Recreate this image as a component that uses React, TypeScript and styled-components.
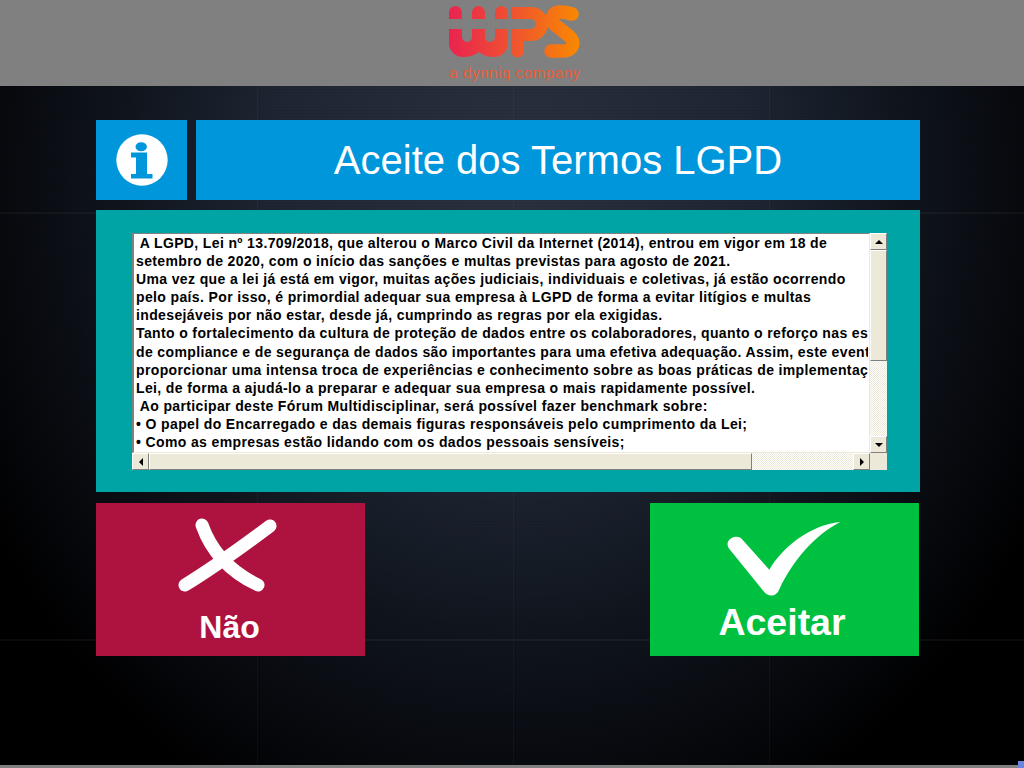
import React from "react";
import styled, { createGlobalStyle } from "styled-components";

const GlobalStyle = createGlobalStyle`
  html, body {
    margin: 0;
    padding: 0;
    background: #000;
  }
`;

const Screen = styled.div`
  position: relative;
  width: 1024px;
  height: 768px;
  overflow: hidden;
  display: flex;
  flex-direction: column;
  font-family: "Liberation Sans", Arial, sans-serif;
  background:
    repeating-linear-gradient(0deg, rgba(0, 0, 0, 0.05) 0 1px, rgba(255, 255, 255, 0) 1px 3px),
    linear-gradient(rgba(255, 255, 255, 0) 212px, rgba(255, 255, 255, 0.04) 212px 214px, rgba(255, 255, 255, 0) 214px 639px, rgba(255, 255, 255, 0.04) 639px 641px, rgba(255, 255, 255, 0) 641px),
    linear-gradient(90deg, rgba(255, 255, 255, 0) 257px, rgba(255, 255, 255, 0.03) 257px 258px, rgba(255, 255, 255, 0) 258px 513px, rgba(255, 255, 255, 0.03) 513px 514px, rgba(255, 255, 255, 0) 514px 769px, rgba(255, 255, 255, 0.03) 769px 770px, rgba(255, 255, 255, 0) 770px),
    radial-gradient(ellipse 600px 700px at 512px 180px, #2a3240 0%, #1e2633 40%, #10151d 65%, #07090e 85%, #000 100%);
`;

const TopBar = styled.header`
  height: 86px;
  flex: none;
  background: #808080;
  display: flex;
  flex-direction: column;
  align-items: center;
`;

const Logo = styled.svg`
  display: block;
  width: 132px;
  height: 54px;
  margin: 5px 0 0 6px;
`;

const Tagline = styled.div`
  margin: 6px 0 0 6px;
  font-size: 15px;
  line-height: 15px;
  letter-spacing: 0.6px;
  color: #ee5a33;
`;

const Content = styled.main`
  flex: 1;
  padding: 34px 104px 0 96px;
  display: flex;
  flex-direction: column;
`;

const TitleRow = styled.div`
  display: flex;
  gap: 9px;
  height: 80px;
`;

const IconTile = styled.div`
  width: 91px;
  background: #0096dc;
  display: flex;
  align-items: center;
  justify-content: center;
`;

const TitleTile = styled.h1`
  flex: 1;
  margin: 0;
  background: #0096dc;
  color: #fff;
  font-weight: 400;
  font-size: 40px;
  display: flex;
  align-items: center;
  justify-content: center;
`;

const Panel = styled.section`
  margin-top: 10px;
  height: 282px;
  background: #00a4a4;
  padding: 23px 33px 0 36px;
  box-sizing: border-box;
`;

const ListBox = styled.div`
  width: 755px;
  height: 237px;
  display: grid;
  grid-template-columns: 738px 17px;
  grid-template-rows: 220px 17px;
`;

const TextArea = styled.div`
  background: #fff;
  border: 1px solid #ece9d8;
  border-top-color: #808080;
  border-left: 2px solid #808080;
  box-sizing: border-box;
  overflow: hidden;
  padding: 0 0 0 2px;
  color: #000;
  font-size: 14px;
  font-weight: 700;
  line-height: 18.1px;
  letter-spacing: 0.37px;
`;

const TextLine = styled.div`
  white-space: pre;
  width: 732px;
  overflow: hidden;
`;

const ScrollTrack = styled.div<{ $vertical?: boolean }>`
  display: flex;
  flex-direction: ${(p) => (p.$vertical ? "column" : "row")};
  background-color: #fff;
  background-image: repeating-conic-gradient(#ece9d8 0% 25%, #fff 0% 50%);
  background-size: 2px 2px;
`;

const ScrollButton = styled.div`
  width: 17px;
  height: 17px;
  flex: none;
  box-sizing: border-box;
  background: #ece9d8;
  border: 1px solid;
  border-color: #fff #808080 #808080 #fff;
  display: flex;
  align-items: center;
  justify-content: center;
`;

const Arrow = styled.span<{ $dir: "up" | "down" | "left" | "right" }>`
  width: 0;
  height: 0;
  border-style: solid;
  border-color: transparent;
  ${(p) =>
    p.$dir === "up"
      ? "border-width: 0 4px 4px; border-bottom-color: #000;"
      : p.$dir === "down"
      ? "border-width: 4px 4px 0; border-top-color: #000;"
      : p.$dir === "left"
      ? "border-width: 4px 4px 4px 0; border-right-color: #000;"
      : "border-width: 4px 0 4px 4px; border-left-color: #000;"}
`;

const ScrollThumb = styled.div<{ $size: number; $vertical?: boolean }>`
  flex: none;
  box-sizing: border-box;
  background: #ece9d8;
  border: 1px solid;
  border-color: #fff #808080 #808080 #fff;
  ${(p) => (p.$vertical ? `height: ${p.$size}px;` : `width: ${p.$size}px;`)}
`;

const TrackFill = styled.div`
  flex: 1;
`;

const Corner = styled.div`
  background: #ece9d8;
`;

const ActionRow = styled.div`
  margin-top: 11px;
  display: flex;
  justify-content: space-between;
  padding-right: 1px;
`;

const ActionButton = styled.button<{ $color: string }>`
  width: 269px;
  height: 153px;
  padding: 0;
  border: 0;
  background: ${(p) => p.$color};
  color: #fff;
  font-family: inherit;
  font-weight: 700;
  display: flex;
  flex-direction: column;
  align-items: center;
`;

const NoIcon = styled.svg`
  display: block;
  width: 100px;
  height: 80px;
  margin: 11px 5px 0 0;
`;

const YesIcon = styled.svg`
  display: block;
  width: 116px;
  height: 74px;
  margin: 19px 3px 0 0;
`;

const NoLabel = styled.span`
  margin: 14px 2px 0 0;
  font-size: 32px;
  line-height: 38px;
`;

const YesLabel = styled.span`
  margin: 6px 5px 0 0;
  font-size: 37.5px;
  line-height: 41px;
`;

const BottomBar = styled.div`
  position: absolute;
  left: 0;
  right: 0;
  bottom: 0;
  height: 3px;
  background: #808080;
`;

const BottomCorner = styled.div`
  position: absolute;
  right: 0;
  bottom: 0;
  width: 6px;
  height: 7px;
  background: #6a86e0;
`;

const TERMS = [
  " A LGPD, Lei nº 13.709/2018, que alterou o Marco Civil da Internet (2014), entrou em vigor em 18 de",
  "setembro de 2020, com o início das sanções e multas previstas para agosto de 2021.",
  "Uma vez que a lei já está em vigor, muitas ações judiciais, individuais e coletivas, já estão ocorrendo",
  "pelo país. Por isso, é primordial adequar sua empresa à LGPD de forma a evitar litígios e multas",
  "indesejáveis por não estar, desde já, cumprindo as regras por ela exigidas.",
  "Tanto o fortalecimento da cultura de proteção de dados entre os colaboradores, quanto o reforço nas es",
  "de compliance e de segurança de dados são importantes para uma efetiva adequação. Assim, este event",
  "proporcionar uma intensa troca de experiências e conhecimento sobre as boas práticas de implementaç",
  "Lei, de forma a ajudá-lo a preparar e adequar sua empresa o mais rapidamente possível.",
  " Ao participar deste Fórum Multidisciplinar, será possível fazer benchmark sobre:",
  "• O papel do Encarregado e das demais figuras responsáveis pelo cumprimento da Lei;",
  "• Como as empresas estão lidando com os dados pessoais sensíveis;",
];

const App = () => {
  return (
    <Screen>
      <GlobalStyle />
      <TopBar>
        <Logo viewBox="0 0 132 54">
          <defs>
            <linearGradient id="wps" gradientUnits="userSpaceOnUse" x1="0" y1="0" x2="132" y2="0">
              <stop offset="0" stopColor="#ea2350" />
              <stop offset="0.45" stopColor="#ef4f32" />
              <stop offset="1" stopColor="#f98a00" />
            </linearGradient>
          </defs>
          <g fill="url(#wps)">
            <path d="M0 14V7.5A6.5 6.5 0 0 1 13 7.5V14Z" />
            <path d="M23 14V7.5A6.5 6.5 0 0 1 36 7.5V14Z" />
            <path d="M46 14V7.5A6.5 6.5 0 0 1 59 7.5V14Z" />
            <path d="M0 24H13V32A5 5 0 0 0 23 32V24H36V32A5 5 0 0 0 46 32V24H59V38A14 14 0 0 1 45 52Q36 52 30 47Q24 52 14 52A14 14 0 0 1 0 38Z" />
            <path d="M62 2H82A17 17 0 0 1 82 36H75V46A6.5 6.5 0 0 1 62 46V24H82A5 5 0 0 0 82 14H62Z" />
          </g>
          <path
            d="M123 9C117 7 113 7 111 7C103 7 101 15 106 20L120 31C127 37 124 46 114 46H102"
            fill="none"
            stroke="url(#wps)"
            strokeWidth="13.5"
            strokeLinecap="round"
          />
        </Logo>
        <Tagline>a dynniq company</Tagline>
      </TopBar>
      <Content>
        <TitleRow>
          <IconTile>
            <svg width="52" height="52" viewBox="0 0 52 52">
              <circle cx="26" cy="26" r="25.7" fill="#fff" />
              <ellipse cx="25.2" cy="12.7" rx="5.7" ry="4.5" fill="#0096dc" />
              <path d="M15 18.5H31V40H36.5V44.5H15V40H20V23.5H15Z" fill="#0096dc" />
            </svg>
          </IconTile>
          <TitleTile>Aceite dos Termos LGPD</TitleTile>
        </TitleRow>
        <Panel>
          <ListBox>
            <TextArea>
              {TERMS.map((line) => (
                <TextLine key={line}>{line}</TextLine>
              ))}
            </TextArea>
            <ScrollTrack $vertical>
              <ScrollButton>
                <Arrow $dir="up" />
              </ScrollButton>
              <ScrollThumb $vertical $size={111} />
              <TrackFill />
              <ScrollButton>
                <Arrow $dir="down" />
              </ScrollButton>
            </ScrollTrack>
            <ScrollTrack>
              <ScrollButton>
                <Arrow $dir="left" />
              </ScrollButton>
              <ScrollThumb $size={603} />
              <TrackFill />
              <ScrollButton>
                <Arrow $dir="right" />
              </ScrollButton>
            </ScrollTrack>
            <Corner />
          </ListBox>
        </Panel>
        <ActionRow>
          <ActionButton $color="#ae123e">
            <NoIcon viewBox="0 0 100 80">
              <g fill="none" stroke="#fff" strokeWidth="13" strokeLinecap="round">
                <path d="M24 11Q38 51 80 71" />
                <path d="M92 12Q40.5 50.5 7 71" />
              </g>
            </NoIcon>
            <NoLabel>Não</NoLabel>
          </ActionButton>
          <ActionButton $color="#00c040">
            <YesIcon viewBox="0 0 113 73">
              <path
                d="M3 26C0 21 3 16 8 15C11 14 15 15 17 18L43 47C56 25 83 3 113 0C89 12 66 38 53 66C50 74 42 74 38 69Z"
                fill="#fff"
              />
            </YesIcon>
            <YesLabel>Aceitar</YesLabel>
          </ActionButton>
        </ActionRow>
      </Content>
      <BottomBar />
      <BottomCorner />
    </Screen>
  );
};

export default App;
